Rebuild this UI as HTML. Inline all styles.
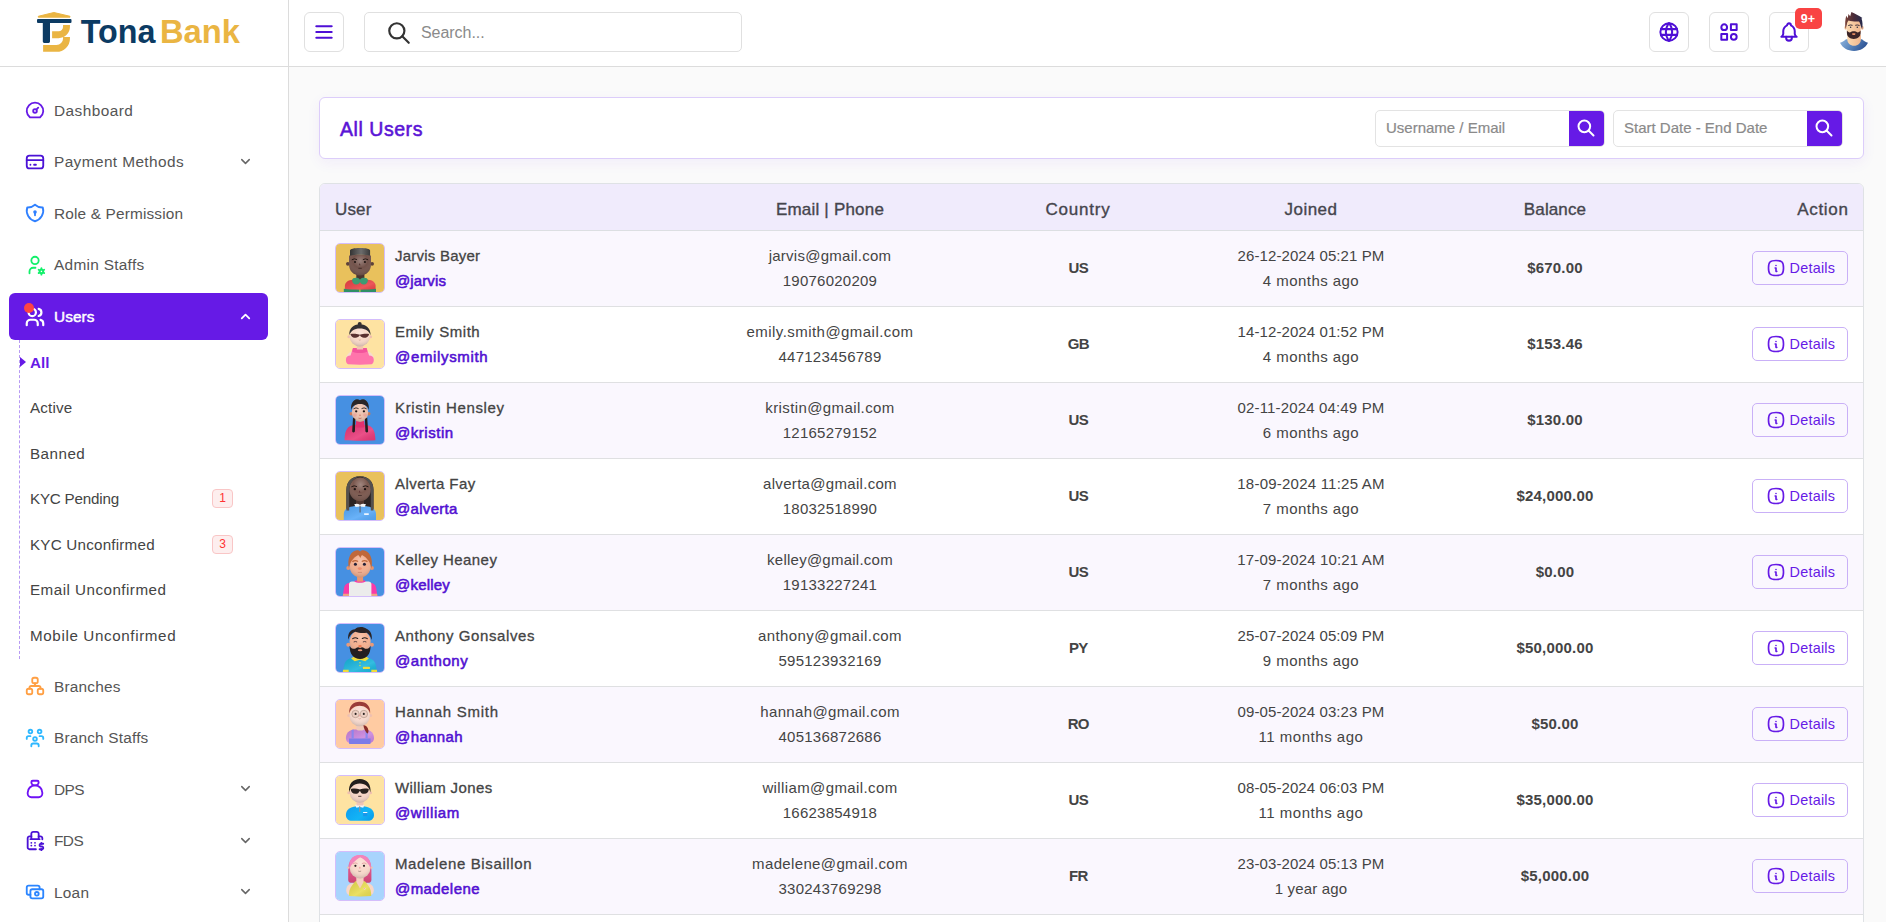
<!DOCTYPE html>
<html lang="en"><head><meta charset="utf-8"><title>All Users</title>
<style>
*{box-sizing:border-box;margin:0;padding:0}
html,body{width:1886px;height:922px;overflow:hidden}
body{font-family:"Liberation Sans",sans-serif;font-size:15px;color:#444;background:#fafafa;position:relative}
.ti{display:block}
.sidebar{position:absolute;left:0;top:0;width:289px;height:922px;background:#fff;border-right:1px solid #dcdcdc}
.logo{position:absolute;left:0;top:0;width:288px;height:67px;border-bottom:1px solid #dcdcdc}
.logo svg{position:absolute;left:36px;top:10px}
.mi{position:absolute;left:0;width:288px;height:24px;color:#555;font-size:15.4px;line-height:24px}
.mi .ic{position:absolute;left:24px;top:0}
.mi .tx{position:absolute;left:54px;top:0;white-space:nowrap}
.mi .ch{position:absolute;left:238px;top:4px}
.active{position:absolute;left:9px;top:293px;width:259px;height:47px;background:#661ae6;border-radius:6px;color:#fff}
.active .ic{position:absolute;left:15px;top:13px}
.active .tx{position:absolute;left:45px;top:11.68px;line-height:24px;font-size:15.4px;letter-spacing:.05px;-webkit-text-stroke:.45px #fff}
.active .ch{position:absolute;left:229px;top:16px}
.active .dot{position:absolute;left:15px;top:10px;width:10px;height:10px;border-radius:50%;background:#f44}
.subline{position:absolute;left:19px;top:340px;height:319px;width:0;border-left:1px dashed #b79af3}
.si{position:absolute;left:30px;height:22px;line-height:22px;color:#444;font-size:15.2px;white-space:nowrap}
.si.on{color:#661ae6;font-weight:bold;letter-spacing:0}
.tri{position:absolute;left:20px;top:357px;width:0;height:0;border-left:6px solid #661ae6;border-top:5.5px solid transparent;border-bottom:5.5px solid transparent}
.bdg{position:absolute;left:212px;width:21px;height:19px;border:1px solid #f9c6c6;background:#fdeeee;color:#f33;border-radius:4px;font-size:12px;line-height:17px;text-align:center}
.header{position:absolute;left:289px;top:0;width:1597px;height:67px;background:#fff;border-bottom:1px solid #dcdcdc}
.hb{position:absolute;top:12px;width:40px;height:40px;border:1px solid #e0e0e0;border-radius:6px;background:#fff;color:#4f0fd6}
.hb svg{position:absolute;left:50%;top:50%;transform:translate(-50%,-50%)}
.srch{position:absolute;left:75px;top:12px;width:378px;height:40px;border:1px solid #e0e0e0;border-radius:5px}
.srch svg{position:absolute;left:20.8px;top:6.6px}
.srch span{position:absolute;left:56px;top:1px;line-height:38px;color:#8a8a8a;font-size:16px;letter-spacing:-.05px}
.nb{position:absolute;left:1505.5px;top:8px;width:27px;height:21px;border-radius:5px;background:#f94343;color:#fff;font-size:12.5px;font-weight:bold;line-height:23px;text-align:center}
.card{position:absolute;left:319px;top:97px;width:1545px;height:62px;background:#fff;border:1px solid #dccdfa;border-radius:6px;box-shadow:0 4px 14px rgba(102,26,230,.06)}
.card h2{position:absolute;left:20px;top:18.5px;font-size:19.5px;line-height:24px;color:#5a14d6;font-weight:normal;letter-spacing:.55px;-webkit-text-stroke:.55px #5a14d6}
.inp{position:absolute;top:12px;height:37px;width:230px;border:1px solid #e3e3e3;border-radius:5px;background:#fff}
.inp span{position:absolute;left:10px;top:0;line-height:33px;color:#8a8a8a;font-size:15px;letter-spacing:0;white-space:nowrap;-webkit-text-stroke:.2px #8a8a8a}
.inp i{position:absolute;right:0;top:0;width:35px;height:35px;background:#661ae6;border-radius:0 4px 4px 0;color:#fff}
.inp i svg{position:absolute;left:7.2px;top:6.9px}
.tbl{position:absolute;left:319px;top:183px;width:1545px;height:800px;border:1px solid #dfe2e5;border-radius:6px 6px 0 0;overflow:hidden;background:#fff}
.th{position:absolute;left:0;top:0;width:100%;height:47px;background:#f0ebfc;border-bottom:1px solid #dcdfe2}
.th span{position:absolute;top:1px;line-height:49px;font-size:17px;color:#45454d;white-space:nowrap;transform:translateX(-50%);-webkit-text-stroke:.35px #45454d;letter-spacing:.2px}
.th span.l{transform:none}
.th span.r{transform:translateX(-100%)}
.tr{position:absolute;left:0;width:100%;height:76px;border-bottom:1px solid #dfe0e2;background:#fff}
.tr.o{background:#faf7fe}
.av{position:absolute;left:15px;top:12px;width:50px;height:50px;border:1px solid #d4bdfb;border-radius:5px;overflow:hidden}
.av svg{display:block}
.nm{position:absolute;left:75px;top:12px;line-height:25px;white-space:nowrap;color:#444;-webkit-text-stroke:.3px #444}
.un{position:absolute;left:75px;top:37px;line-height:25px;white-space:nowrap;color:#5210d2;-webkit-text-stroke:.55px #5210d2}
.c{position:absolute;top:12px;line-height:25px;white-space:nowrap;text-align:center;transform:translateX(-50%)}
.c.em{left:510px}
.c.co{left:758.3px;top:24px;font-weight:bold;letter-spacing:-.7px}
.c.jo{left:991px}
.c.ba{left:1235px;top:24px;font-weight:bold}
.btn{position:absolute;left:1432px;top:20px;width:96px;height:34px;border:1px solid #c9b0f7;border-radius:5px;color:#661ae6;background:transparent}
.btn svg{position:absolute;left:12.6px;top:6px}
.btn span{position:absolute;left:36.5px;top:0;line-height:32px;font-size:14.4px;letter-spacing:.25px}
</style></head>
<body>
<aside class="sidebar">
<div class="logo"><svg width="252" height="56" viewBox="36 0 252 56" style="left:36px;top:0"><path d="M38.3 16.3L53.9 12.5L70 16.3V17.2H38.3Z" fill="#eab543" stroke="#eab543" stroke-width="1" stroke-linejoin="round"/><rect x="37" y="19" width="34.5" height="4" rx="1" fill="#0c3b63"/><path d="M42.8 22h7.2v19.6a1.4 1.4 0 0 1-1.4 1.4h-4.4a1.4 1.4 0 0 1-1.4-1.4z" fill="#0c3b63"/><path d="M66.5 25V26.8A7.9 7.9 0 0 1 58.6 34.7H52.1" fill="none" stroke="#eab543" stroke-width="6.9"/><path d="M66.5 36.9V38.4A10 10 0 0 1 56.5 48.4H43.1" fill="none" stroke="#eab543" stroke-width="6.9"/><text x="80.7" y="43.2" font-family="Liberation Sans, sans-serif" font-size="33" font-weight="bold" fill="#0c3b63" textLength="74.7" lengthAdjust="spacingAndGlyphs">Tona</text><text x="160" y="43.2" font-family="Liberation Sans, sans-serif" font-size="33" font-weight="bold" fill="#eab543" textLength="80" lengthAdjust="spacingAndGlyphs">Bank</text></svg></div>
<div class="mi" style="top:98.68px;letter-spacing:0.438px"><span class="ic" style="top:0.32px"><svg class="ti" width="22" height="22" viewBox="0 0 24 24" fill="none" stroke="#661ae6" stroke-width="2" stroke-linecap="round" stroke-linejoin="round" ><path d="M12 13m-2 0a2 2 0 1 0 4 0a2 2 0 1 0 -4 0"/><path d="M13.45 11.55l2.05 -2.05"/><path d="M6.4 20a9 9 0 1 1 11.2 0z"/></svg></span><span class="tx">Dashboard</span></div>
<div class="mi" style="top:149.68px;letter-spacing:0.398px"><span class="ic" style="top:1.32px"><svg class="ti" width="22" height="22" viewBox="0 0 24 24" fill="none" stroke="#4b12d6" stroke-width="2" stroke-linecap="round" stroke-linejoin="round" ><path d="M3 8a3 3 0 0 1 3 -3h12a3 3 0 0 1 3 3v8a3 3 0 0 1 -3 3h-12a3 3 0 0 1 -3 -3z"/><path d="M3 10l18 0"/><path d="M7 15l.01 0"/><path d="M11 15l2 0"/></svg></span><span class="tx">Payment Methods</span><span class="ch" style="top:4.42px"><svg class="ti" width="15" height="15" viewBox="0 0 24 24" fill="none" stroke="#666" stroke-width="2.4" stroke-linecap="round" stroke-linejoin="round" ><path d="M6 9l6 6l6 -6"/></svg></span></div>
<div class="mi" style="top:201.68px;letter-spacing:0.151px"><span class="ic" style="top:0.32px"><svg class="ti" width="22" height="22" viewBox="0 0 24 24" fill="none" stroke="#2f80ff" stroke-width="2" stroke-linecap="round" stroke-linejoin="round" ><path d="M12 3a12 12 0 0 0 8.5 3a12 12 0 0 1 -8.5 15a12 12 0 0 1 -8.5 -15a12 12 0 0 0 8.5 -3"/><path d="M12 11m-1 0a1 1 0 1 0 2 0a1 1 0 1 0 -2 0"/><path d="M12 12l0 2.5"/></svg></span><span class="tx">Role &amp; Permission</span></div>
<div class="mi" style="top:252.68px;letter-spacing:0.289px"><span class="ic" style="top:1.32px"><svg class="ti" width="22" height="22" viewBox="0 0 24 24" fill="none" stroke="#12f06a" stroke-width="2" stroke-linecap="round" stroke-linejoin="round" ><path d="M8 7a4 4 0 1 0 8 0a4 4 0 0 0 -8 0"/><path d="M6 21v-2a4 4 0 0 1 4 -4h2.5"/><path d="M19.001 19m-2 0a2 2 0 1 0 4 0a2 2 0 1 0 -4 0"/><path d="M19.001 15.5v1.5"/><path d="M19.001 21v1.5"/><path d="M22.032 17.25l-1.299 .75"/><path d="M17.27 20l-1.3 .75"/><path d="M15.97 17.25l1.3 .75"/><path d="M20.733 20l1.3 .75"/></svg></span><span class="tx">Admin Staffs</span></div>
<div class="mi" style="top:674.68px;letter-spacing:0.191px"><span class="ic" style="top:0.32px"><svg class="ti" width="22" height="22" viewBox="0 0 24 24" fill="none" stroke="#ff9f43" stroke-width="2" stroke-linecap="round" stroke-linejoin="round" ><path d="M3 17a2 2 0 0 1 2 -2h2a2 2 0 0 1 2 2v2a2 2 0 0 1 -2 2h-2a2 2 0 0 1 -2 -2z"/><path d="M15 17a2 2 0 0 1 2 -2h2a2 2 0 0 1 2 2v2a2 2 0 0 1 -2 2h-2a2 2 0 0 1 -2 -2z"/><path d="M9 5a2 2 0 0 1 2 -2h2a2 2 0 0 1 2 2v2a2 2 0 0 1 -2 2h-2a2 2 0 0 1 -2 -2z"/><path d="M6 15v-1a2 2 0 0 1 2 -2h8a2 2 0 0 1 2 2v1"/><path d="M12 9l0 3"/></svg></span><span class="tx">Branches</span></div>
<div class="mi" style="top:725.68px;letter-spacing:0.184px"><span class="ic" style="top:1.32px"><svg class="ti" width="22" height="22" viewBox="0 0 24 24" fill="none" stroke="#2fb8ff" stroke-width="2" stroke-linecap="round" stroke-linejoin="round" ><path d="M10 13a2 2 0 1 0 4 0a2 2 0 0 0 -4 0"/><path d="M8 21v-1a2 2 0 0 1 2 -2h4a2 2 0 0 1 2 2v1"/><path d="M15 5a2 2 0 1 0 4 0a2 2 0 0 0 -4 0"/><path d="M17 10h2a2 2 0 0 1 2 2v1"/><path d="M5 5a2 2 0 1 0 4 0a2 2 0 0 0 -4 0"/><path d="M3 13v-1a2 2 0 0 1 2 -2h2"/></svg></span><span class="tx">Branch Staffs</span></div>
<div class="mi" style="top:777.68px;letter-spacing:-0.55px"><span class="ic" style="top:0.32px"><svg class="ti" width="22" height="22" viewBox="0 0 24 24" fill="none" stroke="#6f12f5" stroke-width="2" stroke-linecap="round" stroke-linejoin="round" ><path d="M9.5 3h5a1.5 1.5 0 0 1 1.5 1.5a3.5 3.5 0 0 1 -3.5 3.5h-1a3.5 3.5 0 0 1 -3.5 -3.5a1.5 1.5 0 0 1 1.5 -1.5z"/><path d="M4 17v-1a8 8 0 1 1 16 0v1a4 4 0 0 1 -4 4h-8a4 4 0 0 1 -4 -4z"/></svg></span><span class="tx">DPS</span><span class="ch" style="top:3.42px"><svg class="ti" width="15" height="15" viewBox="0 0 24 24" fill="none" stroke="#666" stroke-width="2.4" stroke-linecap="round" stroke-linejoin="round" ><path d="M6 9l6 6l6 -6"/></svg></span></div>
<div class="mi" style="top:828.68px;letter-spacing:-0.55px"><span class="ic" style="top:1.32px"><svg class="ti" width="22" height="22" viewBox="0 0 24 24" fill="none" stroke="#4b12d6" stroke-width="2" stroke-linecap="round" stroke-linejoin="round" ><path d="M21 15h-2.5c-.398 0 -.779 .158 -1.061 .439c-.281 .281 -.439 .663 -.439 1.061c0 .398 .158 .779 .439 1.061c.281 .281 .663 .439 1.061 .439h1c.398 0 .779 .158 1.061 .439c.281 .281 .439 .663 .439 1.061c0 .398 -.158 .779 -.439 1.061c-.281 .281 -.663 .439 -1.061 .439h-2.5"/><path d="M19 21v1m0 -8v1"/><path d="M13 21h-7c-.53 0 -1.039 -.211 -1.414 -.586c-.375 -.375 -.586 -.884 -.586 -1.414v-10c0 -.53 .211 -1.039 .586 -1.414c.375 -.375 .884 -.586 1.414 -.586h2m12 3.12v-1.12c0 -.53 -.211 -1.039 -.586 -1.414c-.375 -.375 -.884 -.586 -1.414 -.586h-2"/><path d="M16 10v-6c0 -.53 -.211 -1.039 -.586 -1.414c-.375 -.375 -.884 -.586 -1.414 -.586h-4c-.53 0 -1.039 .211 -1.414 .586c-.375 .375 -.586 .884 -.586 1.414v6m8 0h-8m8 0h1m-9 0h-1"/><path d="M8 14v.01"/><path d="M8 17v.01"/><path d="M12 13.99v.01"/><path d="M12 17v.01"/></svg></span><span class="tx">FDS</span><span class="ch" style="top:4.42px"><svg class="ti" width="15" height="15" viewBox="0 0 24 24" fill="none" stroke="#666" stroke-width="2.4" stroke-linecap="round" stroke-linejoin="round" ><path d="M6 9l6 6l6 -6"/></svg></span></div>
<div class="mi" style="top:880.68px;letter-spacing:0.236px"><span class="ic" style="top:0.32px"><svg class="ti" width="22" height="22" viewBox="0 0 24 24" fill="none" stroke="#2b85ff" stroke-width="2" stroke-linecap="round" stroke-linejoin="round" ><path d="M7 11a2 2 0 0 1 2 -2h10a2 2 0 0 1 2 2v6a2 2 0 0 1 -2 2h-10a2 2 0 0 1 -2 -2z"/><path d="M14 14m-2 0a2 2 0 1 0 4 0a2 2 0 1 0 -4 0"/><path d="M17 9v-2a2 2 0 0 0 -2 -2h-10a2 2 0 0 0 -2 2v6a2 2 0 0 0 2 2h2"/></svg></span><span class="tx">Loan</span><span class="ch" style="top:3.42px"><svg class="ti" width="15" height="15" viewBox="0 0 24 24" fill="none" stroke="#666" stroke-width="2.4" stroke-linecap="round" stroke-linejoin="round" ><path d="M6 9l6 6l6 -6"/></svg></span></div>
<div class="active"><span class="ic"><svg class="ti" width="22" height="22" viewBox="0 0 24 24" fill="none" stroke="#fff" stroke-width="2.4" stroke-linecap="round" stroke-linejoin="round" ><path d="M9 7m-4 0a4 4 0 1 0 8 0a4 4 0 1 0 -8 0"/><path d="M3 21v-2a4 4 0 0 1 4 -4h4a4 4 0 0 1 4 4v2"/><path d="M16 3.13a4 4 0 0 1 0 7.75"/><path d="M21 21v-2a4 4 0 0 0 -3 -3.85"/></svg></span><span class="dot"></span><span class="tx">Users</span><span class="ch"><svg class="ti" width="15" height="15" viewBox="0 0 24 24" fill="none" stroke="#fff" stroke-width="2.8" stroke-linecap="round" stroke-linejoin="round" ><path d="M6 15l6 -6l6 6"/></svg></span></div>
<div class="subline"></div><div class="tri"></div>
<div class="si on" style="top:351.75px;letter-spacing:0px">All</div>
<div class="si" style="top:396.75px;letter-spacing:0.163px">Active</div>
<div class="si" style="top:442.75px;letter-spacing:0.479px">Banned</div>
<div class="si" style="top:487.75px;letter-spacing:-0.206px">KYC Pending</div><div class="bdg" style="top:489px">1</div>
<div class="si" style="top:533.75px;letter-spacing:0.218px">KYC Unconfirmed</div><div class="bdg" style="top:535px">3</div>
<div class="si" style="top:578.75px;letter-spacing:0.475px">Email Unconfirmed</div>
<div class="si" style="top:624.75px;letter-spacing:0.62px">Mobile Unconfirmed</div>
</aside>
<header class="header">
<div class="hb" style="left:15px"><svg class="ti" width="23" height="23" viewBox="0 0 24 24" fill="none" stroke="#4f0fd6" stroke-width="2.2" stroke-linecap="round" stroke-linejoin="round" ><path d="M4 6l16 0"/><path d="M4 12l16 0"/><path d="M4 18l16 0"/></svg></div>
<div class="srch"><svg class="ti" width="26" height="26" viewBox="0 0 24 24" fill="none" stroke="#333" stroke-width="2" stroke-linecap="round" stroke-linejoin="round" ><path d="M10 10m-7 0a7 7 0 1 0 14 0a7 7 0 1 0 -14 0"/><path d="M21 21l-6 -6"/></svg><span>Search...</span></div>
<div class="hb" style="left:1360px"><svg class="ti" width="23" height="23" viewBox="0 0 24 24" fill="none" stroke="#4f0fd6" stroke-width="2.1" stroke-linecap="round" stroke-linejoin="round" ><path d="M3 12a9 9 0 1 0 18 0a9 9 0 0 0 -18 0"/><path d="M3.6 9h16.8"/><path d="M3.6 15h16.8"/><path d="M11.5 3a17 17 0 0 0 0 18"/><path d="M12.5 3a17 17 0 0 1 0 18"/></svg></div>
<div class="hb" style="left:1420px"><svg class="ti" width="23" height="23" viewBox="0 0 24 24" fill="none" stroke="#4f0fd6" stroke-width="2.1" stroke-linecap="round" stroke-linejoin="round" ><path d="M14 4h6v6h-6z"/><path d="M4 14h6v6h-6z"/><path d="M17 17m-3 0a3 3 0 1 0 6 0a3 3 0 1 0 -6 0"/><path d="M7 7m-3 0a3 3 0 1 0 6 0a3 3 0 1 0 -6 0"/></svg></div>
<div class="hb" style="left:1480px"><svg class="ti" width="23" height="23" viewBox="0 0 24 24" fill="none" stroke="#4f0fd6" stroke-width="2.1" stroke-linecap="round" stroke-linejoin="round" ><path d="M10 5a2 2 0 1 1 4 0a7 7 0 0 1 4 6v3a4 4 0 0 0 2 3h-16a4 4 0 0 0 2 -3v-3a7 7 0 0 1 4 -6"/><path d="M9 17v1a3 3 0 0 0 6 0v-1"/></svg></div>
<div class="nb">9+</div>
<svg width="50" height="50" viewBox="0 0 50 50" style="position:absolute;left:1541px;top:8px"><defs><linearGradient id="sh" x1="0" y1="0" x2="1" y2=".3"><stop offset="0" stop-color="#8fb4dc"/><stop offset=".5" stop-color="#5a86bd"/><stop offset="1" stop-color="#2f5596"/></linearGradient><linearGradient id="hr" x1="0" y1="0" x2="1" y2="0"><stop offset="0" stop-color="#7a4238"/><stop offset=".5" stop-color="#4a2c3a"/><stop offset="1" stop-color="#262a4c"/></linearGradient><linearGradient id="sk" x1="0" y1="0" x2="1" y2="0"><stop offset="0" stop-color="#fbd9b0"/><stop offset="1" stop-color="#f0b68e"/></linearGradient></defs><path d="M10 34.700c2-.4 4-1.600 6-3.400h16c2 1.800 4 3 6 3.400c-2.500 5-7.500 8.200-14 8.200s-11.500-3.200-14-8.200z" fill="url(#sh)"/><path d="M17.300 27h13.600v4.500c0 3.500-3 6.300-6.800 6.300s-6.800-2.800-6.800-6.300z" fill="url(#sk)"/><ellipse cx="15.700" cy="19.800" rx="1.300" ry="2" fill="#f3c59c"/><ellipse cx="32.300" cy="19.800" rx="1.300" ry="2" fill="#e9b08a"/><path d="M16.800 11h13.900v13c0 4.200-3 6.800-6.950 6.800S16.800 28.200 16.800 24z" fill="url(#sk)"/><path d="M16.900 22.500c.8 1.200 1.600 1.800 3 2c1.200-1 2.500-1.300 3.850-1.300s2.650.3 3.850 1.300c1.400-.2 2.200-.8 3-2v2.300c0 4-3 6.200-6.850 6.200S16.900 28.800 16.900 24.800z" fill="#3a2428"/><path d="M22 25.600c1.100-.5 2.400-.5 3.500 0l-.5 1.300h-2.500z" fill="#e58a62"/><path d="M15.500 21C14.800 16 15.200 11 16.300 7.800l1.500 2.400l.6-4.300l1.800 2.400L21.400 4c3.500 1.500 7.500 3.500 11 6l-.9.600c1.200 3 1.300 6.800.6 10.400l-1.500-3.500c-.3-1.800-.8-3-1.600-4c-3.500.3-7.500 0-10.500-1c-1 1.200-1.600 2.600-1.700 4.500z" fill="url(#hr)"/><path d="M18.600 17.400q1.800-.9 3.600-.2M25.600 17.200q1.800-.7 3.600.2" fill="none" stroke="#2a2030" stroke-width=".9" stroke-linecap="round"/><circle cx="20.600" cy="19.300" r=".75" fill="#2a3040"/><circle cx="27.300" cy="19.300" r=".75" fill="#2a3040"/></svg>
</header>
<section class="card"><h2>All Users</h2>
<div class="inp" style="left:1055px"><span>Username / Email</span><i><svg class="ti" width="20" height="20" viewBox="0 0 24 24" fill="none" stroke="#fff" stroke-width="2.4" stroke-linecap="round" stroke-linejoin="round" ><path d="M10 10m-7 0a7 7 0 1 0 14 0a7 7 0 1 0 -14 0"/><path d="M21 21l-6 -6"/></svg></i></div>
<div class="inp" style="left:1293px"><span>Start Date - End Date</span><i><svg class="ti" width="20" height="20" viewBox="0 0 24 24" fill="none" stroke="#fff" stroke-width="2.4" stroke-linecap="round" stroke-linejoin="round" ><path d="M10 10m-7 0a7 7 0 1 0 14 0a7 7 0 1 0 -14 0"/><path d="M21 21l-6 -6"/></svg></i></div>
</section>
<section class="tbl">
<div class="th"><span class="l" style="left:15px;letter-spacing:0.135px">User</span><span class="" style="left:510px;letter-spacing:0.197px">Email | Phone</span><span class="" style="left:758px;letter-spacing:0.762px">Country</span><span class="" style="left:991px;letter-spacing:0.461px">Joined</span><span class="" style="left:1235px;letter-spacing:0.127px">Balance</span><span class="r" style="left:1528.5px;letter-spacing:0.65px">Action</span></div>
<div class="tr o" style="top:47px"><div class="av"><svg width="48" height="48" viewBox="0 0 48 48"><defs><radialGradient id="h1" cx=".52" cy=".3" r=".75"><stop offset="0" stop-color="#fff" stop-opacity=".28"/><stop offset=".45" stop-color="#fff" stop-opacity="0"/><stop offset="1" stop-color="#000" stop-opacity=".22"/></radialGradient><linearGradient id="b1" x1="0" y1="0" x2="1" y2="1"><stop offset="0" stop-color="#000" stop-opacity=".08"/><stop offset=".6" stop-color="#fff" stop-opacity=".12"/><stop offset="1" stop-color="#000" stop-opacity=".05"/></linearGradient><linearGradient id="c1" x1="0" y1="0" x2="1" y2="0"><stop offset="0" stop-color="#333"/><stop offset=".55" stop-color="#6c6c6c"/><stop offset="1" stop-color="#3a3a3a"/></linearGradient></defs><rect width="48" height="48" fill="#e9c15c"/><path d="M8.900 48V42c0-4 3.500-6 8-6.300h14.700c4.500.3 8 2.300 8 6.300v6z" fill="#ea4045"/><path d="M8.900 48V42c0-4 3.500-6 8-6.300h14.700c4.500.3 8 2.300 8 6.300v6z" fill="url(#b1)"/><path d="M7.800 44.800c10 1.200 22.200 1.200 32.200 0V48H7.800z" fill="#2f8f66"/><rect x="23.400" y="45.600" width="1" height="2.400" fill="#d8d83a"/><rect x="20.300" y="28" width="8.100" height="8" rx="2" fill="#4a342f"/><path d="M16.100 36.200c0-2 2.500-2.800 5-2.400c1.500.2 2.400 1 2.900 2c.5-1 1.400-1.800 2.900-2c2.500-.4 5 .4 5 2.400c0 2.800-2 4.400-4.400 4.200c-1.600-.1-2.900-1-3.500-2.400c-.6 1.400-1.900 2.300-3.500 2.400c-2.400.2-4.400-1.400-4.400-4.200z" fill="#3d9b73"/><circle cx="11.900" cy="19.800" r="1.900" fill="#5d423a"/><circle cx="36.100" cy="19.800" r="1.900" fill="#5d423a"/><path d="M13 12c0-2 22-2 22 0v8c0 7-4.500 11.400-11 11.400S13 27 13 20z" fill="#72524a"/><path d="M13 12c0-2 22-2 22 0v8c0 7-4.500 11.400-11 11.400S13 27 13 20z" fill="url(#h1)"/><path d="M14 11.800V6.600c0-1.600 4-2.500 10-2.500s10.100.9 10.100 2.500v5.200c-5-1.300-15-1.300-20.100 0z" fill="url(#c1)"/><circle cx="19" cy="18" r="1.1" fill="#1d1412"/><circle cx="28.9" cy="18" r="1.1" fill="#1d1412"/><path d="M16.099999999999998 15.600000000000001q2.3 -1.600 4.6 -.200" fill="none" stroke="#231815" stroke-width="1" stroke-linecap="round"/><path d="M31.8 15.600000000000001q-2.3 -1.600 -4.6 -.200" fill="none" stroke="#231815" stroke-width="1" stroke-linecap="round"/><path d="M23.600 19l.9 2.200h-1.500z" fill="#4e2c2c"/><path d="M22.800 24.300h2.600" stroke="#2a1a18" stroke-width=".7" stroke-linecap="round"/></svg></div><div class="nm"><span style="letter-spacing:0.234px">Jarvis Bayer</span></div><div class="un"><span style="letter-spacing:0.111px">@jarvis</span></div><div class="c em"><span style="letter-spacing:0.257px">jarvis@gmail.com</span><br><span style="letter-spacing:0.241px">19076020209</span></div><div class="c co">US</div><div class="c jo"><span style="letter-spacing:0.092px">26-12-2024 05:21 PM</span><br><span style="letter-spacing:0.451px">4 months ago</span></div><div class="c ba"><span style="letter-spacing:0.19px">$670.00</span></div><div class="btn"><svg class="ti" width="20" height="20" viewBox="0 0 24 24" fill="none" stroke="#661ae6" stroke-width="2" stroke-linecap="round" stroke-linejoin="round" ><path d="M12 9h.01"/><path d="M11 12h1v4h1"/><path d="M12 3c7.2 0 9 1.800 9 9s-1.800 9 -9 9s-9 -1.800 -9 -9s1.800 -9 9 -9z"/></svg><span>Details</span></div></div>
<div class="tr" style="top:123px"><div class="av"><svg width="48" height="48" viewBox="0 0 48 48"><defs><radialGradient id="h2" cx=".52" cy=".3" r=".75"><stop offset="0" stop-color="#fff" stop-opacity=".28"/><stop offset=".45" stop-color="#fff" stop-opacity="0"/><stop offset="1" stop-color="#000" stop-opacity=".22"/></radialGradient><linearGradient id="b2" x1="0" y1="0" x2="1" y2="1"><stop offset="0" stop-color="#000" stop-opacity=".08"/><stop offset=".6" stop-color="#fff" stop-opacity=".12"/><stop offset="1" stop-color="#000" stop-opacity=".05"/></linearGradient></defs><rect width="48" height="48" fill="#fee3a2"/><path d="M10.300 38.500c0-3.500 2.500-6.500 6-7h15.400c3.500.5 6 3.500 6 7c0 3.300-2.500 5.800-6 5.800H16.300c-3.500 0-6-2.500-6-5.800z" fill="#f7dccd"/><path d="M12 44.300c-1.500-.8-2.100-2.500-2.100-4.500c0-3 2-4.300 4.600-4.300l2.500-7.400h13.600l2.500 7.400c2.600 0 4.700 1.300 4.700 4.300c0 2-.6 3.700-2.100 4.500c-7.500.6-16.200.6-23.700 0z" fill="#ff74ab"/><path d="M17 28.100h13.600l.8 3.400c-4 2-11.200 2-15.200 0z" fill="#f4549c"/><rect x="20.800" y="24" width="6.300" height="5.500" fill="#f3c4b0"/><circle cx="12.900" cy="16.800" r="1.500" fill="#f0bfae"/><circle cx="34.600" cy="16.800" r="1.500" fill="#f0bfae"/><ellipse cx="23.8" cy="16.8" rx="10.2" ry="9.6" fill="#f8d8c8"/><ellipse cx="23.8" cy="16.8" rx="10.2" ry="9.6" fill="url(#h2)"/><path d="M13.300 15.200c-.3-7 4-11 10.500-11s10.800 4 10.800 11c-1.500-4-5-6.600-10.800-6.600S15 11.200 13.300 15.200z" fill="#333033"/><circle cx="23.700" cy="4" r="2" fill="#333033"/><path d="M14.400 13.900c3-.5 6.500-.3 8.600.5l.8.300l.8-.3c2.100-.8 5.600-1 8.600-.5c-.6 2.600-2.800 3.900-5.200 3.900c-1.800 0-3.200-.9-3.800-2.200h-.8c-.6 1.300-2 2.200-3.800 2.200c-2.400 0-4.600-1.300-5.200-3.900z" fill="#5a3030"/><path d="M22.800 19.800q1 .9 2 0" fill="none" stroke="#c79a8a" stroke-width=".6"/></svg></div><div class="nm"><span style="letter-spacing:0.552px">Emily Smith</span></div><div class="un"><span style="letter-spacing:0.653px">@emilysmith</span></div><div class="c em"><span style="letter-spacing:0.458px">emily.smith@gmail.com</span><br><span style="letter-spacing:0.239px">447123456789</span></div><div class="c co">GB</div><div class="c jo"><span style="letter-spacing:0.092px">14-12-2024 01:52 PM</span><br><span style="letter-spacing:0.451px">4 months ago</span></div><div class="c ba"><span style="letter-spacing:0.19px">$153.46</span></div><div class="btn"><svg class="ti" width="20" height="20" viewBox="0 0 24 24" fill="none" stroke="#661ae6" stroke-width="2" stroke-linecap="round" stroke-linejoin="round" ><path d="M12 9h.01"/><path d="M11 12h1v4h1"/><path d="M12 3c7.2 0 9 1.800 9 9s-1.800 9 -9 9s-9 -1.800 -9 -9s1.800 -9 9 -9z"/></svg><span>Details</span></div></div>
<div class="tr o" style="top:199px"><div class="av"><svg width="48" height="48" viewBox="0 0 48 48"><defs><radialGradient id="h3" cx=".52" cy=".3" r=".75"><stop offset="0" stop-color="#fff" stop-opacity=".28"/><stop offset=".45" stop-color="#fff" stop-opacity="0"/><stop offset="1" stop-color="#000" stop-opacity=".22"/></radialGradient><linearGradient id="b3" x1="0" y1="0" x2="1" y2="1"><stop offset="0" stop-color="#000" stop-opacity=".08"/><stop offset=".6" stop-color="#fff" stop-opacity=".12"/><stop offset="1" stop-color="#000" stop-opacity=".05"/></linearGradient></defs><rect width="48" height="48" fill="#4690e2"/><path d="M8.600 44.300c0-8 2-13.500 7-14.800l8.400-1.500l8.400 1.500c5 1.300 7 6.800 7 14.800c-9 .6-22 .6-30.800 0z" fill="#e83878"/><path d="M8.600 44.300c0-8 2-13.500 7-14.800l8.400-1.500l8.400 1.500c5 1.300 7 6.800 7 14.800c-9 .6-22 .6-30.800 0z" fill="url(#b3)"/><rect x="20" y="24.500" width="8.400" height="7" rx="1.500" fill="#e2306e"/><circle cx="15.200" cy="17.700" r="1.700" fill="#c97a5a"/><circle cx="32.800" cy="17.700" r="1.700" fill="#c97a5a"/><ellipse cx="24" cy="16.6" rx="8.2" ry="9.4" fill="#ecc0ac"/><ellipse cx="24" cy="16.6" rx="8.2" ry="9.4" fill="url(#h3)"/><path d="M15.300 14c-1-6 2-10.500 5.500-10.800c1.200-.1 2.300.3 3.200 1c.9-.7 2-1.100 3.200-1c3.500.3 6.500 4.800 5.500 10.800c-.8-3.500-3.500-6-8.700-6s-7.900 2.500-8.700 6z" fill="#2a2628"/><path d="M17 21.500l2.300 1.500l-.4 12.500c-.8 1.200-2.100 1.200-2.700 0z" fill="#221e20"/><path d="M31.200 21.500l-2.300 1.500l.5 12.500c.8 1.200 2.100 1.200 2.700 0z" fill="#221e20"/><circle cx="20.2" cy="15.3" r="1.15" fill="#1d1412"/><circle cx="27.9" cy="15.3" r="1.15" fill="#1d1412"/><path d="M17.8 12.600000000000001q2.2 -1.600 4.4 -.200" fill="none" stroke="#2a2224" stroke-width="0.9" stroke-linecap="round"/><path d="M30.3 12.600000000000001q-2.2 -1.600 -4.4 -.200" fill="none" stroke="#2a2224" stroke-width="0.9" stroke-linecap="round"/><circle cx="19" cy="19" r="1.800" fill="#e88c8c" opacity=".45"/><circle cx="29" cy="19" r="1.800" fill="#e88c8c" opacity=".45"/><ellipse cx="24" cy="19.300" rx="1" ry=".8" fill="#d98a78"/><path d="M22.800 22.300q1.200.6 2.400 0" fill="none" stroke="#c0675f" stroke-width=".8" stroke-linecap="round"/></svg></div><div class="nm"><span style="letter-spacing:0.64px">Kristin Hensley</span></div><div class="un"><span style="letter-spacing:0.543px">@kristin</span></div><div class="c em"><span style="letter-spacing:0.388px">kristin@gmail.com</span><br><span style="letter-spacing:0.241px">12165279152</span></div><div class="c co">US</div><div class="c jo"><span style="letter-spacing:0.154px">02-11-2024 04:49 PM</span><br><span style="letter-spacing:0.451px">6 months ago</span></div><div class="c ba"><span style="letter-spacing:0.19px">$130.00</span></div><div class="btn"><svg class="ti" width="20" height="20" viewBox="0 0 24 24" fill="none" stroke="#661ae6" stroke-width="2" stroke-linecap="round" stroke-linejoin="round" ><path d="M12 9h.01"/><path d="M11 12h1v4h1"/><path d="M12 3c7.2 0 9 1.800 9 9s-1.800 9 -9 9s-9 -1.800 -9 -9s1.800 -9 9 -9z"/></svg><span>Details</span></div></div>
<div class="tr" style="top:275px"><div class="av"><svg width="48" height="48" viewBox="0 0 48 48"><defs><radialGradient id="h4" cx=".52" cy=".3" r=".75"><stop offset="0" stop-color="#fff" stop-opacity=".28"/><stop offset=".45" stop-color="#fff" stop-opacity="0"/><stop offset="1" stop-color="#000" stop-opacity=".22"/></radialGradient><linearGradient id="b4" x1="0" y1="0" x2="1" y2="1"><stop offset="0" stop-color="#000" stop-opacity=".08"/><stop offset=".6" stop-color="#fff" stop-opacity=".12"/><stop offset="1" stop-color="#000" stop-opacity=".05"/></linearGradient></defs><rect width="48" height="48" fill="#e9c15c"/><path d="M10.400 38.500V18C10.400 9.500 15.500 4.200 24 4.200S37.500 9.500 37.500 18v20.500z" fill="#2b2322"/><path d="M7.800 48v-6c0-5 5-8.200 16.200-8.200S40 37 40 42v6z" fill="#55a8f8"/><path d="M7.800 48v-6c0-5 5-8.200 16.200-8.200S40 37 40 42v6z" fill="url(#b4)"/><rect x="20" y="27" width="8" height="7" fill="#4e3630"/><path d="M18.200 32.300c2-.8 3.600-.8 5.400.3l.4 1.700l.4-1.700c1.800-1.100 3.400-1.100 5.600-.3l-1.400 2.600l-4.600-.3l-4.400.3z" fill="#f4f4f4"/><rect x="23.600" y="34" width=".9" height="6.500" fill="#5a4a44"/><rect x="28.100" y="41.300" width="4.700" height="1.600" rx=".3" fill="#eef6ff"/><ellipse cx="24.1" cy="17.4" rx="10.8" ry="11.8" fill="#7b584e"/><ellipse cx="24.1" cy="17.4" rx="10.8" ry="11.8" fill="url(#h4)"/><path d="M10.400 38.600V18C10.400 9.500 15.500 4.200 24 4.200c-6 1.800-10.800 6.800-10.800 14.800v19.600z" fill="#54514f"/><path d="M37.500 38.600V18C37.500 9.500 32.500 4.200 24 4.200c6 1.800 10.800 6.800 10.800 14.800v19.600z" fill="#54514f"/><circle cx="18.8" cy="17.2" r="1.15" fill="#1d1412"/><circle cx="29" cy="17.2" r="1.15" fill="#1d1412"/><path d="M15.7 14.600000000000001q2.5 -1.600 5 -.200" fill="none" stroke="#231815" stroke-width="1" stroke-linecap="round"/><path d="M32.1 14.600000000000001q-2.5 -1.600 -5 -.200" fill="none" stroke="#231815" stroke-width="1" stroke-linecap="round"/><path d="M23.500 18.200l1 2.300h-1.600z" fill="#5a2c30"/><path d="M22.400 23.500h3" stroke="#2a1a18" stroke-width=".6" stroke-linecap="round"/></svg></div><div class="nm"><span style="letter-spacing:0.434px">Alverta Fay</span></div><div class="un"><span style="letter-spacing:0.307px">@alverta</span></div><div class="c em"><span style="letter-spacing:0.309px">alverta@gmail.com</span><br><span style="letter-spacing:0.241px">18032518990</span></div><div class="c co">US</div><div class="c jo"><span style="letter-spacing:0.225px">18-09-2024 11:25 AM</span><br><span style="letter-spacing:0.451px">7 months ago</span></div><div class="c ba"><span style="letter-spacing:0.199px">$24,000.00</span></div><div class="btn"><svg class="ti" width="20" height="20" viewBox="0 0 24 24" fill="none" stroke="#661ae6" stroke-width="2" stroke-linecap="round" stroke-linejoin="round" ><path d="M12 9h.01"/><path d="M11 12h1v4h1"/><path d="M12 3c7.2 0 9 1.800 9 9s-1.800 9 -9 9s-9 -1.800 -9 -9s1.800 -9 9 -9z"/></svg><span>Details</span></div></div>
<div class="tr o" style="top:351px"><div class="av"><svg width="48" height="48" viewBox="0 0 48 48"><defs><radialGradient id="h5" cx=".52" cy=".3" r=".75"><stop offset="0" stop-color="#fff" stop-opacity=".28"/><stop offset=".45" stop-color="#fff" stop-opacity="0"/><stop offset="1" stop-color="#000" stop-opacity=".22"/></radialGradient><linearGradient id="b5" x1="0" y1="0" x2="1" y2="1"><stop offset="0" stop-color="#000" stop-opacity=".08"/><stop offset=".6" stop-color="#fff" stop-opacity=".12"/><stop offset="1" stop-color="#000" stop-opacity=".05"/></linearGradient></defs><rect width="48" height="48" fill="#4690e2"/><path d="M6.800 48l1.200-8c.6-3.500 2.800-5 5.600-5.300h21c2.800.3 5 1.800 5.600 5.300l1.200 8z" fill="#f83aa8"/><path d="M6.800 48l.3-2.200h6v2.200zM41.400 48l-.3-2.200h-6v2.200z" fill="#eda283"/><path d="M13 48V36.500c0-1.700 1.300-2.900 3-2.900h16.400c1.700 0 3 1.200 3 2.900V48z" fill="#ececec"/><path d="M18.300 33.500c2 1.800 9.400 1.800 11.400 0l-1-.9h-9.400z" fill="#f83aa8"/><rect x="21.100" y="27" width="6" height="6.600" fill="#e8946f"/><circle cx="12.300" cy="20" r="2" fill="#e8946f"/><circle cx="35.900" cy="20" r="2" fill="#e8946f"/><ellipse cx="24.2" cy="17.8" rx="10.6" ry="11.6" fill="#f3ae8e"/><ellipse cx="24.2" cy="17.8" rx="10.6" ry="11.6" fill="url(#h5)"/><path d="M13 20.500C10.500 10 15.500 2.300 21 2.200c1.400 0 2.400.5 3.100 1.200c.7-.7 1.800-1.200 3.200-1.200c5.500.1 10.500 7.800 8 18.300c-.6-5.500-3.600-10.500-9.300-13.500c-.9 1-1.400 1.800-1.700 3c-.4-1.200-1-2-2.100-3C16.600 10 13.700 15 13 20.500z" fill="#c0683a"/><circle cx="19.4" cy="16.3" r="1.5" fill="#232038"/><circle cx="28.4" cy="16.3" r="1.5" fill="#232038"/><path d="M16.8 13.4q2.4 -1.600 4.8 -.200" fill="none" stroke="#c0683a" stroke-width="1.3" stroke-linecap="round"/><path d="M31.0 13.4q-2.4 -1.600 -4.8 -.200" fill="none" stroke="#c0683a" stroke-width="1.3" stroke-linecap="round"/><ellipse cx="23.800" cy="20.600" rx="2" ry="1.300" fill="#ee8e6e"/><path d="M21.800 24.400h4.200" stroke="#b9735a" stroke-width=".5"/></svg></div><div class="nm"><span style="letter-spacing:0.431px">Kelley Heaney</span></div><div class="un"><span style="letter-spacing:0.204px">@kelley</span></div><div class="c em"><span style="letter-spacing:0.242px">kelley@gmail.com</span><br><span style="letter-spacing:0.241px">19133227241</span></div><div class="c co">US</div><div class="c jo"><span style="letter-spacing:0.163px">17-09-2024 10:21 AM</span><br><span style="letter-spacing:0.451px">7 months ago</span></div><div class="c ba"><span style="letter-spacing:0.176px">$0.00</span></div><div class="btn"><svg class="ti" width="20" height="20" viewBox="0 0 24 24" fill="none" stroke="#661ae6" stroke-width="2" stroke-linecap="round" stroke-linejoin="round" ><path d="M12 9h.01"/><path d="M11 12h1v4h1"/><path d="M12 3c7.2 0 9 1.800 9 9s-1.800 9 -9 9s-9 -1.800 -9 -9s1.800 -9 9 -9z"/></svg><span>Details</span></div></div>
<div class="tr" style="top:427px"><div class="av"><svg width="48" height="48" viewBox="0 0 48 48"><defs><radialGradient id="h6" cx=".52" cy=".3" r=".75"><stop offset="0" stop-color="#fff" stop-opacity=".28"/><stop offset=".45" stop-color="#fff" stop-opacity="0"/><stop offset="1" stop-color="#000" stop-opacity=".22"/></radialGradient><linearGradient id="b6" x1="0" y1="0" x2="1" y2="1"><stop offset="0" stop-color="#000" stop-opacity=".08"/><stop offset=".6" stop-color="#fff" stop-opacity=".12"/><stop offset="1" stop-color="#000" stop-opacity=".05"/></linearGradient></defs><rect width="48" height="48" fill="#4690e2"/><path d="M7 48l1.200-7c.8-4.500 4-6.800 8.800-7.100h14c4.800.3 8 2.600 8.800 7.100L41 48z" fill="#18b4dc"/><path d="M7 48l1.200-7c.8-4.500 4-6.800 8.800-7.100h14c4.800.3 8 2.600 8.800 7.100L41 48z" fill="url(#b6)"/><path d="M15.100 34.400l2.400-1.600h13l2.400 1.600l-3.600 2.800l-5.300-1.400l-5.300 1.400z" fill="#f0dc3c"/><circle cx="24" cy="38.800" r=".7" fill="#f0dc3c"/><circle cx="24" cy="41.500" r=".7" fill="#f0dc3c"/><rect x="27" y="42.700" width="6.900" height="2.300" rx=".5" fill="#f0dc3c"/><path d="M6.800 48l.3-2.200h5.600V48zM41.200 48l-.3-2.200h-5.600V48z" fill="#f0dc3c"/><circle cx="12.300" cy="20.800" r="2" fill="#ea9a78"/><circle cx="35.900" cy="20.800" r="2" fill="#ea9a78"/><ellipse cx="24.1" cy="18" rx="10.5" ry="11.8" fill="#f4b090"/><ellipse cx="24.1" cy="18" rx="10.5" ry="11.8" fill="url(#h6)"/><path d="M13.600 22c0 8 4 13 10.500 13s10.500-5 10.500-13c-1.200 2.200-3 3-5.500 2.800c-1.600-1.800-3.300-2-5-.8c-1.700-1.200-3.400-1-5 .8c-2.500.2-4.300-.6-5.500-2.800z" fill="#241e20"/><ellipse cx="24.100" cy="26.300" rx="2.300" ry="1" fill="#e89878"/><path d="M12.200 15.800C11.500 9 14.500 5.500 19 5.200c2-2.500 8-3 11.500-.5c4 1.500 6 6 5.200 11.300c-1-3.500-2.500-5.800-5-7.300c-4 .8-8 .3-11.500-1c-3.500 1.500-5.800 4-7 8.100z" fill="#2a2426"/><path d="M16.7 14.600000000000001q2.5 -1.600 5 -.200" fill="none" stroke="#241e20" stroke-width="1.1" stroke-linecap="round"/><path d="M31.3 14.600000000000001q-2.5 -1.600 -5 -.200" fill="none" stroke="#241e20" stroke-width="1.1" stroke-linecap="round"/><path d="M18 17.800q1.400-.9 2.800 0M27.200 17.800q1.400-.9 2.800 0" fill="none" stroke="#4a3a40" stroke-width=".9" stroke-linecap="round"/><ellipse cx="24" cy="22.200" rx="1.800" ry="1.100" fill="#ea7a52"/></svg></div><div class="nm"><span style="letter-spacing:0.582px">Anthony Gonsalves</span></div><div class="un"><span style="letter-spacing:0.599px">@anthony</span></div><div class="c em"><span style="letter-spacing:0.414px">anthony@gmail.com</span><br><span style="letter-spacing:0.239px">595123932169</span></div><div class="c co">PY</div><div class="c jo"><span style="letter-spacing:0.092px">25-07-2024 05:09 PM</span><br><span style="letter-spacing:0.451px">9 months ago</span></div><div class="c ba"><span style="letter-spacing:0.199px">$50,000.00</span></div><div class="btn"><svg class="ti" width="20" height="20" viewBox="0 0 24 24" fill="none" stroke="#661ae6" stroke-width="2" stroke-linecap="round" stroke-linejoin="round" ><path d="M12 9h.01"/><path d="M11 12h1v4h1"/><path d="M12 3c7.2 0 9 1.800 9 9s-1.800 9 -9 9s-9 -1.800 -9 -9s1.800 -9 9 -9z"/></svg><span>Details</span></div></div>
<div class="tr o" style="top:503px"><div class="av"><svg width="48" height="48" viewBox="0 0 48 48"><defs><radialGradient id="h7" cx=".52" cy=".3" r=".75"><stop offset="0" stop-color="#fff" stop-opacity=".28"/><stop offset=".45" stop-color="#fff" stop-opacity="0"/><stop offset="1" stop-color="#000" stop-opacity=".22"/></radialGradient><linearGradient id="b7" x1="0" y1="0" x2="1" y2="1"><stop offset="0" stop-color="#000" stop-opacity=".08"/><stop offset=".6" stop-color="#fff" stop-opacity=".12"/><stop offset="1" stop-color="#000" stop-opacity=".05"/></linearGradient></defs><rect width="48" height="48" fill="#ffcba2"/><path d="M9.900 38c0-4.500 3-8 8-8.600h12c5 .6 8.100 4.100 8.100 8.600c0 3-2 5.200-5 5.200H14.900c-3 0-5-2.200-5-5.200z" fill="#c983dd"/><path d="M9.900 38c0-4.500 3-8 8-8.600h12c5 .6 8.100 4.100 8.100 8.600c0 3-2 5.200-5 5.200H14.900c-3 0-5-2.200-5-5.200z" fill="url(#b7)"/><path d="M13 38.500h21.600V43c0 .6-.4 1-1 1H14c-.6 0-1-.4-1-1z" fill="#7c7ce8"/><path d="M15.600 30l2.100-.5v9h-2.100zM29.500 29.500l2.200.5v8.500h-2.200z" fill="#8a86ee"/><rect x="20.300" y="24" width="7.800" height="6.500" rx="2" fill="#f0c8b8"/><circle cx="12.800" cy="15.600" r="1.500" fill="#f0c0b0"/><circle cx="34.600" cy="15.600" r="1.500" fill="#f0c0b0"/><ellipse cx="23.7" cy="16" rx="10.2" ry="10.3" fill="#f8dace"/><ellipse cx="23.7" cy="16" rx="10.2" ry="10.3" fill="url(#h7)"/><path d="M13.300 13.500C12.500 6.500 17 1.800 23.700 1.800S35 6.500 34.100 13.500c-1.200-4.500-5-7.700-10.400-7.700s-9.200 3.200-10.400 7.700z" fill="#9a3c38"/><path d="M27.400 25.300c2.500-.5 4.500 2 5 5c.3 1.800-.3 3-1.200 3.300c-1.500-1.500-3.500-5-3.800-8.300z" fill="#8a2c2a"/><circle cx="19.500" cy="14" r="3.700" fill="#d8b8a8" fill-opacity=".35" stroke="#b59a8a" stroke-width=".7"/><circle cx="27.900" cy="14" r="3.700" fill="#d8b8a8" fill-opacity=".35" stroke="#b59a8a" stroke-width=".7"/><circle cx="19.6" cy="13.9" r="1.05" fill="#2a2220"/><circle cx="27.8" cy="13.9" r="1.05" fill="#2a2220"/><ellipse cx="23.700" cy="15.600" rx=".8" ry="1" fill="#f0a8a0"/><path d="M22.500 18.400q1.200 1 2.400 0" fill="none" stroke="#c79a8a" stroke-width=".6"/></svg></div><div class="nm"><span style="letter-spacing:0.722px">Hannah Smith</span></div><div class="un"><span style="letter-spacing:0.403px">@hannah</span></div><div class="c em"><span style="letter-spacing:0.373px">hannah@gmail.com</span><br><span style="letter-spacing:0.239px">405136872686</span></div><div class="c co">RO</div><div class="c jo"><span style="letter-spacing:0.092px">09-05-2024 03:23 PM</span><br><span style="letter-spacing:0.524px">11 months ago</span></div><div class="c ba"><span style="letter-spacing:0.184px">$50.00</span></div><div class="btn"><svg class="ti" width="20" height="20" viewBox="0 0 24 24" fill="none" stroke="#661ae6" stroke-width="2" stroke-linecap="round" stroke-linejoin="round" ><path d="M12 9h.01"/><path d="M11 12h1v4h1"/><path d="M12 3c7.2 0 9 1.800 9 9s-1.800 9 -9 9s-9 -1.800 -9 -9s1.800 -9 9 -9z"/></svg><span>Details</span></div></div>
<div class="tr" style="top:579px"><div class="av"><svg width="48" height="48" viewBox="0 0 48 48"><defs><radialGradient id="h8" cx=".52" cy=".3" r=".75"><stop offset="0" stop-color="#fff" stop-opacity=".28"/><stop offset=".45" stop-color="#fff" stop-opacity="0"/><stop offset="1" stop-color="#000" stop-opacity=".22"/></radialGradient><linearGradient id="b8" x1="0" y1="0" x2="1" y2="1"><stop offset="0" stop-color="#000" stop-opacity=".08"/><stop offset=".6" stop-color="#fff" stop-opacity=".12"/><stop offset="1" stop-color="#000" stop-opacity=".05"/></linearGradient><linearGradient id="s8" x1="0" y1="0" x2="1" y2=".6"><stop offset="0" stop-color="#0e9cf0"/><stop offset=".7" stop-color="#12b4f6"/><stop offset="1" stop-color="#0aa2ee"/></linearGradient></defs><rect width="48" height="48" fill="#fee3a2"/><path d="M9.900 39c0-5.500 4.500-9 14.100-9s14 3.500 14 9c0 3.500-2.500 5.800-6 5.800H15.900c-3.500 0-6-2.300-6-5.800z" fill="url(#s8)"/><path d="M19.200 29c2-.9 3.500-.9 4.600.3l-.2 1.800l-3.200.6zM28.400 29c-2-.9-3.500-.9-4.600.3l.2 1.800l3.200.6z" fill="#f4f4f6"/><rect x="23.400" y="30" width=".8" height="6" fill="#c08870"/><rect x="27.100" y="36" width="4.200" height="4.200" rx=".5" fill="#1a96ea"/><rect x="27.100" y="36" width="4.200" height="1" fill="#f2f8ff"/><rect x="20.500" y="24" width="7" height="5.500" fill="#f0c4b4"/><circle cx="12.800" cy="16.800" r="1.500" fill="#f0c0b0"/><circle cx="34.600" cy="16.800" r="1.500" fill="#f0c0b0"/><ellipse cx="23.8" cy="16.8" rx="10.1" ry="10" fill="#f6d4c6"/><ellipse cx="23.8" cy="16.8" rx="10.1" ry="10" fill="url(#h8)"/><path d="M13.200 16.500C12 8 17 2.900 23.800 2.900S35.500 8 34.400 16.500c-.8-5-4.500-9-10.600-9s-9.800 4-10.600 9z" fill="#221e1e"/><path d="M14.800 12.900c3-.5 6-.5 8.300.3l.7.200l.7-.2c2.300-.8 5.300-.8 8.300-.3c0 3-1.800 4.900-4.600 4.900c-2.200 0-3.600-1-4-2.600h-.8c-.4 1.600-1.800 2.600-4 2.600c-2.800 0-4.600-1.900-4.600-4.900z" fill="#2a2220"/><path d="M22.600 20.300h2.400" stroke="#2a1a18" stroke-width=".8" stroke-linecap="round"/></svg></div><div class="nm"><span style="letter-spacing:0.39px">William Jones</span></div><div class="un"><span style="letter-spacing:0.567px">@william</span></div><div class="c em"><span style="letter-spacing:0.392px">william@gmail.com</span><br><span style="letter-spacing:0.241px">16623854918</span></div><div class="c co">US</div><div class="c jo"><span style="letter-spacing:0.092px">08-05-2024 06:03 PM</span><br><span style="letter-spacing:0.524px">11 months ago</span></div><div class="c ba"><span style="letter-spacing:0.199px">$35,000.00</span></div><div class="btn"><svg class="ti" width="20" height="20" viewBox="0 0 24 24" fill="none" stroke="#661ae6" stroke-width="2" stroke-linecap="round" stroke-linejoin="round" ><path d="M12 9h.01"/><path d="M11 12h1v4h1"/><path d="M12 3c7.2 0 9 1.800 9 9s-1.800 9 -9 9s-9 -1.800 -9 -9s1.800 -9 9 -9z"/></svg><span>Details</span></div></div>
<div class="tr o" style="top:655px"><div class="av"><svg width="48" height="48" viewBox="0 0 48 48"><defs><radialGradient id="h9" cx=".52" cy=".3" r=".75"><stop offset="0" stop-color="#fff" stop-opacity=".28"/><stop offset=".45" stop-color="#fff" stop-opacity="0"/><stop offset="1" stop-color="#000" stop-opacity=".22"/></radialGradient><linearGradient id="b9" x1="0" y1="0" x2="1" y2="1"><stop offset="0" stop-color="#000" stop-opacity=".08"/><stop offset=".6" stop-color="#fff" stop-opacity=".12"/><stop offset="1" stop-color="#000" stop-opacity=".05"/></linearGradient><linearGradient id="p9" x1="0" y1="0" x2="0" y2="1"><stop offset="0" stop-color="#f284bb"/><stop offset=".5" stop-color="#e0588c"/><stop offset="1" stop-color="#cc4474"/></linearGradient></defs><rect width="48" height="48" fill="#a8d4fd"/><path d="M12.200 18C12.200 8.500 16.500 3.100 24 3.100S35.400 8.500 35.400 18v10c0 2-1.500 2.800-3.500 2.800H15.700c-2 0-3.500-.8-3.500-2.800z" fill="url(#p9)"/><path d="M10.200 38.500c0-4 2.500-7 6-7.300h15.600c3.500.3 6 3.300 6 7.300c0 3-2 4.800-4.500 4.800H14.700c-2.500 0-4.500-1.800-4.500-4.800z" fill="#f8d6c8"/><path d="M13 44c-.2-4 .8-8 3-10.500l3.300-4.300h9.600l3.300 4.300c2.200 2.500 3.200 6.500 3 10.500c-7 .5-15 .5-22.200 0z" fill="#e8dc50"/><path d="M13 44c-.2-4 .8-8 3-10.500l3.300-4.300h9.600l3.300 4.300c2.200 2.500 3.200 6.500 3 10.500c-7 .5-15 .5-22.200 0z" fill="url(#b9)"/><path d="M20.300 24h7.300v6l-3.600 6.600L20.300 30z" fill="#f6cfc0"/><circle cx="28.600" cy="36.600" r=".9" fill="#f8f0f0"/><circle cx="28.500" cy="36.500" r=".45" fill="#f040a0"/><circle cx="12.300" cy="15.600" r="1.200" fill="#f0c0b0"/><circle cx="35.500" cy="15.600" r="1.200" fill="#f0c0b0"/><ellipse cx="24.1" cy="15.8" rx="10.4" ry="10.6" fill="#f9d9cb"/><ellipse cx="24.1" cy="15.8" rx="10.4" ry="10.6" fill="url(#h9)"/><path d="M13.500 16.500C12.500 8 17 3.100 24 3.100S35.600 8 34.600 16.500c-1.500-4.500-5-8.500-10.400-11.600c-4.800 3-8.800 7-10.700 11.600z" fill="#f284bb"/><circle cx="19.4" cy="13.8" r="1.1" fill="#2a2220"/><circle cx="28" cy="13.8" r="1.1" fill="#2a2220"/><path d="M17.2 11.600000000000001q2.0 -1.600 4 -.200" fill="none" stroke="#e8a8a8" stroke-width="1" stroke-linecap="round"/><path d="M30.2 11.600000000000001q-2.0 -1.600 -4 -.200" fill="none" stroke="#e8a8a8" stroke-width="1" stroke-linecap="round"/><ellipse cx="23.800" cy="15.800" rx=".9" ry="1" fill="#f4a8a8"/><path d="M22.600 19.300q1.200.6 2.200 0" fill="none" stroke="#806a64" stroke-width=".6" stroke-linecap="round"/></svg></div><div class="nm"><span style="letter-spacing:0.628px">Madelene Bisaillon</span></div><div class="un"><span style="letter-spacing:0.424px">@madelene</span></div><div class="c em"><span style="letter-spacing:0.352px">madelene@gmail.com</span><br><span style="letter-spacing:0.239px">330243769298</span></div><div class="c co">FR</div><div class="c jo"><span style="letter-spacing:0.092px">23-03-2024 05:13 PM</span><br><span style="letter-spacing:0.17px">1 year ago</span></div><div class="c ba"><span style="letter-spacing:0.196px">$5,000.00</span></div><div class="btn"><svg class="ti" width="20" height="20" viewBox="0 0 24 24" fill="none" stroke="#661ae6" stroke-width="2" stroke-linecap="round" stroke-linejoin="round" ><path d="M12 9h.01"/><path d="M11 12h1v4h1"/><path d="M12 3c7.2 0 9 1.800 9 9s-1.800 9 -9 9s-9 -1.800 -9 -9s1.800 -9 9 -9z"/></svg><span>Details</span></div></div>
<div class="tr" style="top:731px"></div>
</section>
</body></html>
